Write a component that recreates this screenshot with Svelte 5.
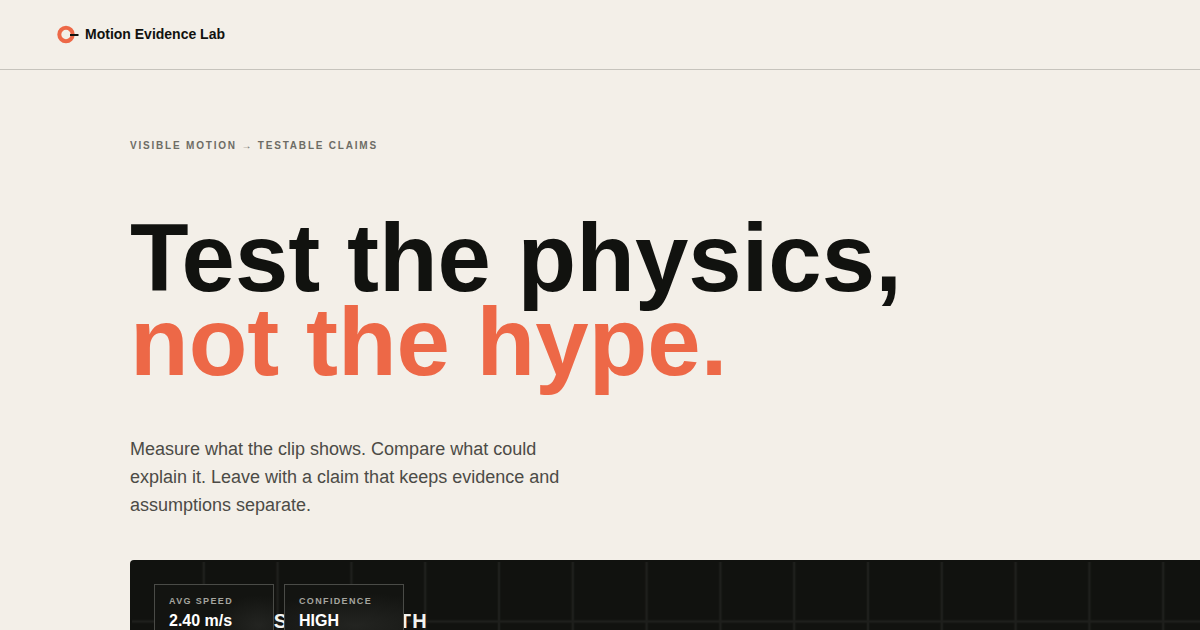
<script>
  const metrics = [
    { label: 'Avg speed', value: '2.40 m/s' },
    { label: 'Confidence', value: 'HIGH' },
  ];
</script>

<div class="page">
  <header>
    <a class="brand" href="#top">
      <svg width="22" height="18" viewBox="0 0 22 18" aria-hidden="true">
        <circle cx="9" cy="9.5" r="6.7" fill="none" stroke="#ed6847" stroke-width="4" />
        <path d="M13 10H21.5" stroke="#11120f" stroke-width="2" />
      </svg>
      <span>Motion Evidence Lab</span>
    </a>
  </header>

  <main id="top">
    <p class="eyebrow">Visible motion → testable claims</p>
    <h1>Test the physics,<br /><span>not the hype.</span></h1>
    <p class="lead">
      Measure what the clip shows. Compare what could explain it. Leave with a claim that keeps
      evidence and assumptions separate.
    </p>

    <section class="stage" aria-label="Observed path">
      <svg class="plot" aria-hidden="true">
        <defs>
          <pattern id="grid" width="60" height="50" patternUnits="userSpaceOnUse" patternTransform="scale(1.23)">
            <path d="M0 0V50M60 0V50M0 0H60M0 50H60" fill="none" stroke="#1e1f1c" stroke-width="2" />
          </pattern>
        </defs>
        <rect x="2" y="2" width="100%" height="100%" fill="url(#grid)" />
        <text x="111" y="68">OBSERVED PATH</text>
      </svg>
      <dl class="metrics">
        {#each metrics as metric}
          <div class="metric">
            <dt>{metric.label}</dt>
            <dd>{metric.value}</dd>
          </div>
        {/each}
      </dl>
    </section>
  </main>
</div>

<style>
  :global(body) {
    margin: 0;
    background: #f3efe8;
  }

  .page {
    overflow: hidden;
    color: #11120f;
    font-family: 'Liberation Sans', Arial, sans-serif;
  }

  header {
    display: flex;
    align-items: center;
    box-sizing: border-box;
    min-height: 70px;
    padding: 0 57px 1px;
    border-bottom: 1px solid #c6c3bc;
  }

  .brand {
    display: flex;
    align-items: center;
    gap: 6px;
    color: inherit;
    font-size: 14px;
    font-weight: 700;
    line-height: 18px;
    text-decoration: none;
  }

  .brand svg {
    overflow: visible;
  }

  main {
    padding: 70px 0 0 130px;
  }

  p,
  h1,
  dl,
  dd {
    margin: 0;
  }

  .eyebrow {
    color: #6d6c65;
    font-size: 10px;
    font-weight: 700;
    letter-spacing: 0.18em;
    line-height: 12px;
    text-transform: uppercase;
  }

  h1 {
    margin-top: 64px;
    font-size: 96px;
    font-weight: 700;
    line-height: 84px;
  }

  h1 span {
    color: #ed6847;
  }

  .lead {
    max-width: 450px;
    margin-top: 51px;
    color: #4c4b46;
    font-size: 18px;
    line-height: 28px;
  }

  .stage {
    position: relative;
    margin-top: 41px;
    overflow: hidden;
    border-radius: 4px 0 0 4px;
    background: #11120f;
  }

  .plot {
    position: absolute;
    inset: 0;
    width: 100%;
    height: 100%;
  }

  .plot text {
    fill: #f3f3ef;
    font-size: 20px;
    font-weight: 700;
    letter-spacing: 0.07em;
  }

  .metrics {
    position: relative;
    display: flex;
    gap: 10px;
    padding: 24px;
  }

  .metric {
    box-sizing: border-box;
    width: 120px;
    padding: 10px 14px;
    border: 1px solid #4a4b47;
    background: radial-gradient(ellipse 48px 30px at 88% 40px, #232421, #131411) #131411;
  }

  .metric + .metric {
    background: radial-gradient(ellipse 110px 32px at 60% 40px, #232421, #131411) #131411;
  }

  dt {
    color: #a5a59f;
    font-size: 9px;
    font-weight: 700;
    letter-spacing: 0.15em;
    line-height: 12px;
    text-transform: uppercase;
  }

  dd {
    margin-top: 4px;
    color: #fff;
    font-size: 16px;
    font-weight: 700;
    line-height: 20px;
  }
</style>
